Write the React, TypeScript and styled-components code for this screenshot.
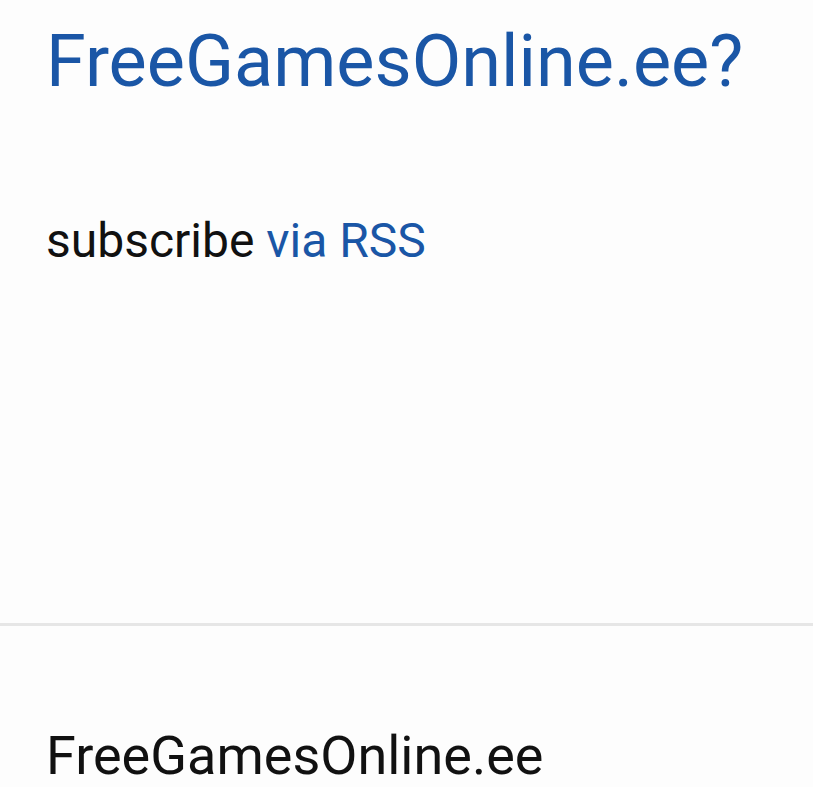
import React from "react";
import styled, { createGlobalStyle } from "styled-components";

const Global = createGlobalStyle`
  html, body { margin: 0; padding: 0; background: #fdfdfd; }
  body { font-family: Roboto, "Noto Sans", sans-serif; color: #111111; }
`;

const Page = styled.div`
  display: flex;
  flex-direction: column;
  min-height: 787px;
`;

const Header = styled.header`
  padding: 0 46px;
  height: 626px;
  box-sizing: border-box;
  border-bottom: 3px solid #e6e6e6;
`;

const Title = styled.a`
  display: block;
  margin-top: 20px;
  font-size: 72px;
  line-height: 84px;
  color: #1a56a6;
  text-decoration: none;
  white-space: nowrap;
`;

const Subscribe = styled.p`
  margin: 109px 0 0;
  font-size: 48px;
  line-height: 56px;
  color: #111111;
`;

const Link = styled.a`
  color: #1a56a6;
  text-decoration: none;
`;

const Footer = styled.footer`
  padding: 0 46px;
`;

const FooterTitle = styled.h2`
  margin: 98px 0 0;
  font-size: 54px;
  font-weight: 400;
  line-height: 63px;
  color: #111111;
  white-space: nowrap;
`;

export default function App() {
  return (
    <Page>
      <Global />
      <Header>
        <Title href="#">FreeGamesOnline.ee?</Title>
        <Subscribe>
          subscribe <Link href="#">via RSS</Link>
        </Subscribe>
      </Header>
      <Footer>
        <FooterTitle>FreeGamesOnline.ee</FooterTitle>
      </Footer>
    </Page>
  );
}
